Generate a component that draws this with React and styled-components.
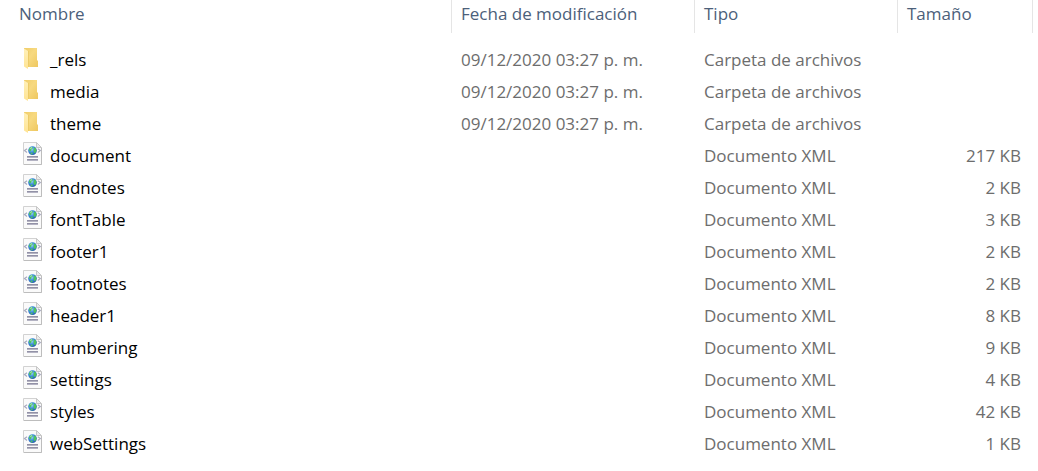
import React from 'react';
import styled, { createGlobalStyle } from 'styled-components';

const GlobalStyle = createGlobalStyle`
  body {
    margin: 0;
    background: #fff;
    font-family: 'Segoe UI', 'Open Sans', 'Noto Sans', sans-serif;
    font-size: 17px;
    line-height: 24px;
  }
`;

const Listing = styled.main`
  padding-right: 5px;
`;

const FileTable = styled.table`
  width: 100%;
  table-layout: fixed;
  border-collapse: separate;
  border-spacing: 0;
`;

const HeaderCell = styled.th`
  box-sizing: border-box;
  width: ${({ $width }) => $width || 'auto'};
  height: 33px;
  padding: 2px 9px 7px ${({ $first }) => ($first ? 19 : 9)}px;
  border-right: 1px solid #e5e5e5;
  color: #4c607a;
  font-weight: 400;
  text-align: left;
  white-space: nowrap;
`;

const FileRows = styled.tbody`
  &::before {
    content: '';
    display: block;
    height: 11px;
  }
`;

const FileRow = styled.tr`
  height: 32px;
`;

const Cell = styled.td`
  padding: 4px 12px 4px 9px;
  color: #6d6d6d;
  text-align: ${({ $align }) => $align || 'left'};
  white-space: nowrap;
`;

const NameCell = styled(Cell)`
  padding-left: 23px;
  color: #000;
`;

const FileName = styled.span`
  display: flex;
  align-items: center;
  gap: 7px;
`;

const Icon = styled.svg`
  flex: none;
  width: 20px;
  height: 24px;
  margin: -2px 0 2px;
`;

const FolderIcon = () => (
  <Icon viewBox="0 0 20 24" aria-hidden="true">
    <path d="M1 2H14V14L15 15V21H5L1 19Z" fill="url(#folderBack)" />
    <path d="M1 2.5L5 5V23L1 20.5Z" fill="url(#folderFlap)" />
    <path d="M5.5 5V21" stroke="#eccb69" strokeWidth="1" />
  </Icon>
);

const XmlIcon = () => (
  <Icon viewBox="0 0 20 24" aria-hidden="true">
    <path d="M0.5 0.5H13.5L18.5 5.5V22.5H0.5Z" fill="#fafafa" stroke="#d2d2d2" />
    <path d="M1 22.5H18.5V6" fill="none" stroke="#bdbdbd" />
    <path d="M13.5 0.5V5.5H18.5Z" fill="#ececec" stroke="#c8c8c8" />
    <path d="M4 6.8L1.5 8.6L4 10.4M14.8 6.8L17.3 8.6L14.8 10.4" fill="none" stroke="#a9abc0" strokeWidth="1.2" />
    <circle cx="9.5" cy="8.6" r="4.3" fill="url(#globeSea)" />
    <path d="M5.8 7.4Q6.8 4.9 9.3 4.7L9.8 6.2L8.4 7.4L8.2 8.8L6.8 9.5ZM11.2 5.6L12.8 6.3L13.6 8.8L12.2 11.2L10.9 10.4L10.5 8.2ZM7.6 10.4L9.6 10.7L9.4 12.6L7.8 12.1Z" fill="#52c45c" />
    <path d="M7 6.2L8.8 5.1L9.2 6L7.6 7Z" fill="#b4e8c2" />
    <path d="M4 14.5H15M4 17.5H15" stroke="#9291a6" />
    <path d="M4 15.5H15M4 18.5H15" stroke="#b4b3c3" />
  </Icon>
);

const HiddenDefs = styled.svg`
  position: absolute;
  width: 0;
  height: 0;
`;

const IconGradients = () => (
  <HiddenDefs aria-hidden="true">
    <defs>
      <linearGradient id="folderBack" x1="0" y1="0" x2="1" y2="1">
        <stop offset="0" stopColor="#f0cd68" />
        <stop offset="0.45" stopColor="#f7d980" />
        <stop offset="1" stopColor="#eec75f" />
      </linearGradient>
      <linearGradient id="folderFlap" x1="0" y1="0" x2="0" y2="1">
        <stop offset="0" stopColor="#fff0b8" />
        <stop offset="1" stopColor="#ffe494" />
      </linearGradient>
      <radialGradient id="globeSea" cx="0.4" cy="0.35" r="0.7">
        <stop offset="0" stopColor="#9fd4fa" />
        <stop offset="0.5" stopColor="#3a8ae0" />
        <stop offset="1" stopColor="#2358a8" />
      </radialGradient>
    </defs>
  </HiddenDefs>
);

const folder = (name) => ({
  name,
  date: '09/12/2020 03:27 p. m.',
  type: 'Carpeta de archivos',
  isFolder: true,
});

const xml = (name, size) => ({ name, type: 'Documento XML', size });

const files = [
  folder('_rels'),
  folder('media'),
  folder('theme'),
  xml('document', '217 KB'),
  xml('endnotes', '2 KB'),
  xml('fontTable', '3 KB'),
  xml('footer1', '2 KB'),
  xml('footnotes', '2 KB'),
  xml('header1', '8 KB'),
  xml('numbering', '9 KB'),
  xml('settings', '4 KB'),
  xml('styles', '42 KB'),
  xml('webSettings', '1 KB'),
];

export default function App() {
  return (
    <Listing>
      <GlobalStyle />
      <IconGradients />
      <FileTable>
        <thead>
          <tr>
            <HeaderCell scope="col" $first>Nombre</HeaderCell>
            <HeaderCell scope="col" $width="243px">Fecha de modificación</HeaderCell>
            <HeaderCell scope="col" $width="203px">Tipo</HeaderCell>
            <HeaderCell scope="col" $width="135px">Tamaño</HeaderCell>
          </tr>
        </thead>
        <FileRows>
          {files.map((file) => (
            <FileRow key={file.name}>
              <NameCell>
                <FileName>
                  {file.isFolder ? <FolderIcon /> : <XmlIcon />}
                  {file.name}
                </FileName>
              </NameCell>
              <Cell>{file.date}</Cell>
              <Cell>{file.type}</Cell>
              <Cell $align="right">{file.size}</Cell>
            </FileRow>
          ))}
        </FileRows>
      </FileTable>
    </Listing>
  );
}
